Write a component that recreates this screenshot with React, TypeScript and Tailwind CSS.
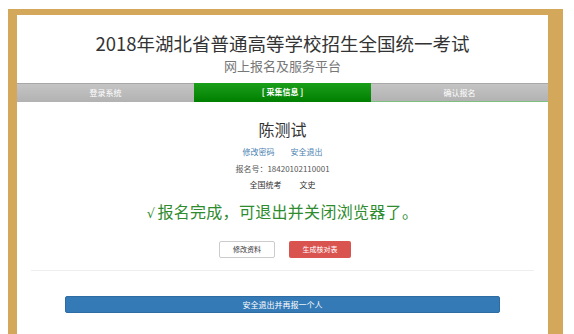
import React from "react";

const font = { fontFamily: '"Noto Sans CJK SC", "Noto Sans", sans-serif' };

export default function App() {
  return (
    <div className="w-[574px] h-[334px] bg-white overflow-hidden pt-[9px] pl-[8px]" style={font}>
      <div className="w-[555px] h-[325px] bg-[#d3a85b] pt-[6px] pl-[9px] pr-[15px]">
        <div className="w-[531px] h-[319px] bg-white flex flex-col">
          <div className="pt-[14px] text-center text-[18.5px] leading-[28px] text-[#333]">
            2018年湖北省普通高等学校招生全国统一考试
          </div>
          <div className="text-center text-[13px] leading-[18px] text-[#777]">
            网上报名及服务平台
          </div>
          <div className="mt-[8px] grid grid-cols-3 h-[17px] text-[8px] leading-[17px] text-white text-center">
            <div className="bg-gradient-to-b from-[#c4c4c4] to-[#b2b2b2] border-t border-[#a8a8a8]">登录系统</div>
            <div className="bg-gradient-to-b from-[#1a9f1a] to-[#007f00] font-bold">[ 采集信息 ]</div>
            <div className="bg-gradient-to-b from-[#c4c4c4] to-[#b2b2b2] border-t border-[#a8a8a8] border-b border-b-[#7fbf7f]">确认报名</div>
          </div>
          <div className="mt-[19px] text-center text-[16px] leading-[20px] text-[#333]">陈测试</div>
          <div className="mt-[5px] flex justify-center gap-[16px] text-[8px] leading-[16px] text-[#4a7fb0]">
            <span>修改密码</span>
            <span>安全退出</span>
          </div>
          <div className="mt-[1px] text-center text-[8px] leading-[16px] text-[#555]">报名号：18420102110001</div>
          <div className="flex justify-center gap-[18px] text-[8px] leading-[16px] text-[#333]">
            <span>全国统考</span>
            <span>文史</span>
          </div>
          <div className="mt-[7px] text-center text-[16px] leading-[22px] text-[#2e8b2e] tracking-[0.3px]">
            <span className="text-[13px] mr-[2px]" style={{ fontFamily: '"DejaVu Sans", sans-serif' }}>√</span>报名完成，可退出并关闭浏览器了。
          </div>
          <div className="mt-[16px] ml-[5px] flex justify-center gap-[14px]">
            <div className="w-[56px] h-[17px] border border-[#ccc] rounded-[2px] bg-white text-[7px] leading-[15px] text-center text-[#333]">修改资料</div>
            <div className="w-[62px] h-[17px] rounded-[2px] bg-[#d9534f] text-[7px] leading-[17px] text-center text-white">生成核对表</div>
          </div>
          <div className="mt-[12px] mx-[14px] h-px bg-[#eeeeee]" />
          <div className="mt-[25px] mx-[48px] h-[17px] rounded-[2px] bg-[#337ab7] border border-[#2e6da4] text-[8px] leading-[15px] text-center text-white">
            安全退出并再报一个人
          </div>
        </div>
      </div>
    </div>
  );
}
